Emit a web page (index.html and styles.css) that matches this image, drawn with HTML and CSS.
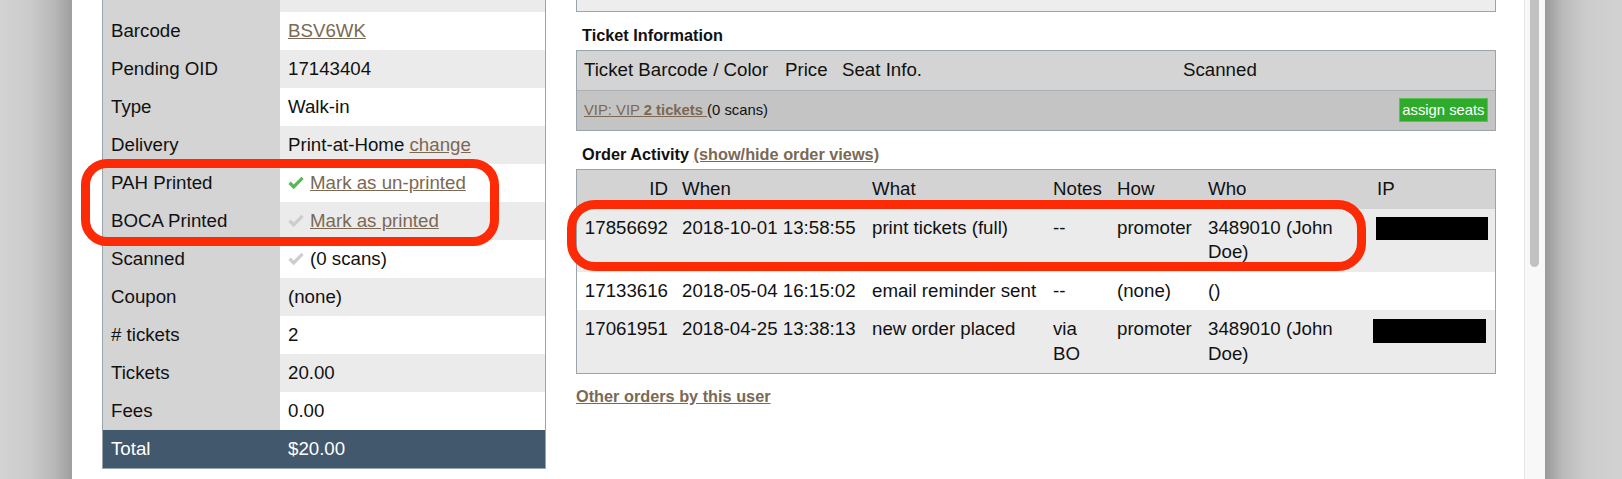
FILE: index.html
```html
<!DOCTYPE html>
<html lang="en">
<head>
<meta charset="utf-8">
<title>Order details</title>
<link rel="stylesheet" href="styles.css">
</head>
<body>
<div class="screen">
  <div class="gutter-left"></div>
  <div class="window">
    <div class="content">
      <table class="summary">
        <colgroup><col class="c-label"><col class="c-value"></colgroup>
        <tbody>
          <tr><td class="lbl">&nbsp;</td><td class="val">&nbsp;</td></tr>
          <tr><td class="lbl">Barcode</td><td class="val"><a href="#">BSV6WK</a></td></tr>
          <tr><td class="lbl">Pending OID</td><td class="val">17143404</td></tr>
          <tr><td class="lbl">Type</td><td class="val">Walk-in</td></tr>
          <tr><td class="lbl">Delivery</td><td class="val">Print-at-Home <a href="#">change</a></td></tr>
          <tr><td class="lbl">PAH Printed</td><td class="val"><svg class="check check-on" viewBox="0 0 16 14" width="16" height="14"><path d="M0.4 7.9 L2.7 5.6 L5.7 8.5 L13.4 0.8 L15.7 3.1 L5.7 13.2 Z"/></svg><a href="#">Mark as un-printed</a></td></tr>
          <tr><td class="lbl">BOCA Printed</td><td class="val"><svg class="check check-off" viewBox="0 0 16 14" width="16" height="14"><path d="M0.4 7.9 L2.7 5.6 L5.7 8.5 L13.4 0.8 L15.7 3.1 L5.7 13.2 Z"/></svg><a href="#">Mark as printed</a></td></tr>
          <tr><td class="lbl">Scanned</td><td class="val"><svg class="check check-off" viewBox="0 0 16 14" width="16" height="14"><path d="M0.4 7.9 L2.7 5.6 L5.7 8.5 L13.4 0.8 L15.7 3.1 L5.7 13.2 Z"/></svg>(0 scans)</td></tr>
          <tr><td class="lbl">Coupon</td><td class="val">(none)</td></tr>
          <tr><td class="lbl"># tickets</td><td class="val">2</td></tr>
          <tr><td class="lbl">Tickets</td><td class="val">20.00</td></tr>
          <tr><td class="lbl">Fees</td><td class="val">0.00</td></tr>
          <tr class="total"><td class="lbl">Total</td><td class="val">$20.00</td></tr>
        </tbody>
      </table>

      <div class="main">
        <table class="grid top-grid">
          <colgroup><col class="t1"><col class="t2"><col class="t3"></colgroup>
          <tbody>
            <tr><td>&nbsp;</td><td>&nbsp;</td><td>&nbsp;</td></tr>
          </tbody>
        </table>

        <h3 class="section-title">Ticket Information</h3>
        <table class="grid tix">
          <colgroup><col class="k1"><col class="k2"><col class="k3"><col class="k4"></colgroup>
          <thead>
            <tr><th>Ticket Barcode / Color</th><th>Price</th><th>Seat Info.</th><th>Scanned</th></tr>
          </thead>
          <tbody>
            <tr>
              <td colspan="4" class="tix-row">
                <div class="tix-line">
                  <span class="tix-text"><a href="#">VIP: VIP <b>2 tickets </b></a>(0 scans)</span>
                  <span class="btn-green">assign seats</span>
                </div>
              </td>
            </tr>
          </tbody>
        </table>

        <h3 class="section-title">Order Activity <a href="#">(show/hide order views)</a></h3>
        <table class="grid activity">
          <colgroup><col class="a-id"><col class="a-when"><col class="a-what"><col class="a-notes"><col class="a-how"><col class="a-who"><col class="a-ip"></colgroup>
          <thead>
            <tr><th class="id">ID</th><th class="nw">When</th><th class="nw">What</th><th class="notes">Notes</th><th>How</th><th>Who</th><th>IP</th></tr>
          </thead>
          <tbody>
            <tr><td class="id">17856692</td><td class="nw">2018-10-01 13:58:55</td><td class="nw">print tickets (full)</td><td class="notes">--</td><td>promoter</td><td>3489010 (John Doe)</td><td><span class="redact"></span></td></tr>
            <tr><td class="id">17133616</td><td class="nw">2018-05-04 16:15:02</td><td class="nw">email reminder sent</td><td class="notes">--</td><td>(none)</td><td>()</td><td></td></tr>
            <tr><td class="id">17061951</td><td class="nw">2018-04-25 13:38:13</td><td class="nw">new order placed</td><td class="notes">via BO</td><td>promoter</td><td>3489010 (John Doe)</td><td><span class="redact redact-2"></span></td></tr>
          </tbody>
        </table>

        <a class="other-orders" href="#">Other orders by this user</a>
      </div>
    </div>
    <div class="scrollbar"><div class="thumb"></div></div>
  </div>
  <div class="gutter-right"></div>

  <div class="mark mark-print"></div>
  <div class="mark mark-activity"></div>
</div>
</body>
</html>
```

FILE: styles.css
```css
html, body {
  margin: 0;
  padding: 0;
}

body {
  width: 1622px;
  height: 479px;
  overflow: hidden;
  background: #d0d0d0;
  font-family: "Liberation Sans", Arial, Helvetica, sans-serif;
  color: #111;
}

a {
  color: #7b6953;
  text-decoration: underline;
}

.screen {
  position: relative;
  display: flex;
  height: 479px;
  overflow: hidden;
}

.gutter-left {
  flex: none;
  width: 72px;
  background: linear-gradient(to right, #d3d3d3 0, #cbcbcb 30px, #b7b7b7 55px, #9e9e9e 72px);
}

.window {
  flex: none;
  width: 1473px;
  display: flex;
  background: #fff;
  overflow: hidden;
}

.content {
  flex: none;
  width: 1452px;
  box-sizing: border-box;
  padding-left: 30px;
  display: flex;
  align-items: flex-start;
  gap: 30px;
}

.scrollbar {
  flex: none;
  width: 21px;
  box-sizing: border-box;
  background: #f8f8f8;
  border-left: 1px solid #e6e6e6;
  padding-left: 5px;
}

.thumb {
  width: 9px;
  height: 287px;
  margin-top: -20px;
  background: #c1c1c1;
  border-radius: 5px;
}

.gutter-right {
  flex: 1;
  background: linear-gradient(to right, #9a9a9a 0, #bababa 18px, #cccccc 40px, #d2d2d2 100%);
}

/* Left summary table */
.summary {
  width: 444px;
  margin-top: -27px;
  border-collapse: separate;
  border-spacing: 0;
  table-layout: fixed;
  border: 1px solid #9aa4ab;
  font-size: 18.7px;
  line-height: 24px;
}

.c-label { width: 177px; }
.c-value { width: 265px; }

.summary td {
  padding: 7px 8px;
  vertical-align: middle;
  white-space: nowrap;
}

.summary .lbl { background: #d4d4d4; }
.summary .val { background: #fff; }
.summary tr:nth-child(odd) .val { background: #ebebeb; }

.summary tr.total td,
.summary tr.total td.val {
  background: #42596d;
  color: #fff;
}

.check {
  vertical-align: -1px;
  margin-right: 6px;
}
.check-on { fill: #56b856; }
.check-off { fill: #cdcdcd; }

/* Right column */
.main {
  flex: none;
  width: 920px;
  margin-top: -30px;
}

.grid {
  width: 920px;
  border-collapse: separate;
  border-spacing: 0;
  table-layout: fixed;
  border: 1px solid #9aa4ab;
  font-size: 18.7px;
  line-height: 24px;
}

.grid th {
  font-weight: normal;
  text-align: left;
}

.top-grid td {
  background: #eeeded;
  padding: 9px 7px 7px;
  white-space: nowrap;
}
.t1 { width: 350px; }
.t2 { width: 438px; }
.t3 { width: 130px; }

.section-title {
  margin: 13px 0 5px 6px;
  font-size: 16.3px;
  line-height: 20px;
  font-weight: bold;
}
.section-title a { font-weight: bold; }

/* Ticket information */
.k1 { width: 201px; }
.k2 { width: 57px; }
.k3 { width: 341px; }
.k4 { width: 319px; }

.tix th {
  background: #d4d4d4;
  padding: 7px;
  line-height: 24.5px;
  white-space: nowrap;
}

.tix-row {
  background: #c4c4c4;
  border-top: 1px solid #a9b1b7;
  padding: 7.5px 7px 8px;
}

.tix-line {
  display: flex;
  justify-content: space-between;
  align-items: center;
  font-size: 14.8px;
  line-height: 18px;
}

.btn-green {
  display: inline-block;
  background: #2eab2a;
  border: 1px solid #5cc058;
  color: #fff;
  padding: 0 2.5px;
  line-height: 22px;
  font-size: 14.8px;
}

/* Order activity */
.a-id { width: 102px; }
.a-when { width: 190px; }
.a-what { width: 181px; }
.a-notes { width: 64px; }
.a-how { width: 91px; }
.a-who { width: 169px; }
.a-ip { width: 121px; }

.activity th,
.activity td {
  padding: 7px 2px 7px 3px;
  line-height: 24.5px;
  vertical-align: top;
}

.activity th { background: #d3d3d3; }
.activity tbody tr:nth-child(odd) td { background: #ebebeb; }
.activity tbody tr:nth-child(even) td { background: #fff; }

.activity .id {
  text-align: right;
  padding-right: 11px;
  white-space: nowrap;
}
.activity .nw { white-space: nowrap; }
.activity .notes { padding-right: 11px; }

.redact {
  display: inline-block;
  width: 112px;
  height: 23px;
  margin-top: 1px;
  margin-left: -1px;
  background: #000;
  vertical-align: top;
}
.redact-2 {
  width: 113px;
  height: 24px;
  margin-top: 2px;
  margin-left: -4px;
}

.other-orders {
  display: block;
  margin-top: 12px;
  font-size: 16.3px;
  line-height: 20px;
  font-weight: bold;
  width: max-content;
}

/* Red annotation outlines drawn over the screenshot */
.mark {
  position: absolute;
  box-sizing: border-box;
  border: 9px solid #fd2a06;
  border-radius: 26px;
  pointer-events: none;
}
.mark-print {
  left: 81px;
  top: 159px;
  width: 418px;
  height: 87px;
}
.mark-activity {
  left: 567px;
  top: 200px;
  width: 799px;
  height: 71px;
  border-radius: 28px;
}
```
